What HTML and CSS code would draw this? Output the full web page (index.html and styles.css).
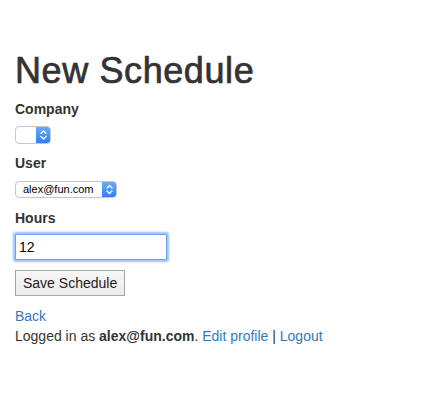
FILE: index.html
```html
<!DOCTYPE html>
<html>
<head>
<meta charset="utf-8">
<link rel="stylesheet" href="styles.css">
</head>
<body>
<div class="container">
  <h1 class="title">New Schedule</h1>
  <form class="form">
    <div class="field">
      <label class="label">Company</label>
      <span class="select select-company">
        <select class="select-native"><option></option></select>
        <span class="select-arrow">
          <svg width="15" height="18" viewBox="0 0 15 18"><path d="M5 7.5 L7.5 5 L10 7.5 M5 10.5 L7.5 13 L10 10.5" fill="none" stroke="#fff" stroke-width="1.3" stroke-linecap="round" stroke-linejoin="round"/></svg>
        </span>
      </span>
    </div>
    <div class="field field-user">
      <label class="label">User</label>
      <span class="select select-user">
        <select class="select-native"><option>alex@fun.com</option></select>
        <span class="select-arrow">
          <svg width="15" height="17" viewBox="0 0 15 17"><path d="M5 7 L7.5 4.5 L10 7 M5 10 L7.5 12.5 L10 10" fill="none" stroke="#fff" stroke-width="1.3" stroke-linecap="round" stroke-linejoin="round"/></svg>
        </span>
      </span>
    </div>
    <div class="field field-hours">
      <label class="label">Hours</label>
      <input class="input" type="text" value="12">
    </div>
    <button class="button" type="button">Save Schedule</button>
  </form>
  <div class="footer">
    <a class="link" href="#">Back</a>
    <p class="status">Logged in as <strong>alex@fun.com</strong>. <a class="link" href="#">Edit profile</a> | <a class="link" href="#">Logout</a></p>
  </div>
</div>
</body>
</html>
```
FILE: styles.css
```css
html, body {
  margin: 0;
  padding: 0;
  background: #fff;
}
body {
  font-family: "Liberation Sans", Arial, sans-serif;
  font-size: 14px;
  line-height: 20px;
  color: #333;
}
.container {
  padding: 31px 15px 0 15px;
}
.title {
  font-size: 36px;
  font-weight: 500;
  line-height: 39.6px;
  margin: 20px 0 8px 0;
  letter-spacing: 0.6px;
  -webkit-text-stroke: 0.7px #333;
}
.form {
  display: flex;
  flex-direction: column;
  align-items: flex-start;
}
.field {
  display: flex;
  flex-direction: column;
  align-items: flex-start;
}
.label {
  font-weight: bold;
  line-height: 20px;
  display: block;
}
.field-hours .label {
  margin-top: 1px;
}
.select {
  position: relative;
  display: block;
  box-sizing: border-box;
  border: 1px solid #c6c6c6;
  border-radius: 4px;
  background: #fff;
  overflow: hidden;
}
.select-company {
  width: 36px;
  height: 18px;
  margin-top: 7px;
  margin-bottom: 9px;
}
.select-user {
  width: 102px;
  height: 17px;
  margin-top: 8px;
  margin-bottom: 9px;
}
.select-native {
  appearance: none;
  -webkit-appearance: none;
  border: 0;
  background: transparent;
  margin: 0;
  padding: 0 0 0 7px;
  font-family: "Liberation Sans", Arial, sans-serif;
  font-size: 11px;
  line-height: 15px;
  height: 15px;
  width: 100%;
  color: #000;
  display: block;
}
.select-arrow {
  position: absolute;
  top: -1px;
  right: -1px;
  bottom: -1px;
  width: 15px;
  background: linear-gradient(#6aaefc, #2a7ef6);
  border-radius: 0 4px 4px 0;
  display: flex;
  align-items: center;
  justify-content: center;
}
.select-arrow svg {
  display: block;
}
.input {
  box-sizing: border-box;
  width: 152px;
  height: 26px;
  margin: 6px 0 10px 0;
  padding: 0 3px;
  border: 1px solid #6aa3e8;
  border-radius: 1px;
  box-shadow: 0 0 2px 2px rgba(120, 175, 245, 0.75);
  font-family: "Liberation Sans", Arial, sans-serif;
  font-size: 14px;
  color: #000;
  outline: none;
}
.button {
  box-sizing: border-box;
  height: 26px;
  padding: 0 7px;
  border: 1px solid #a6a6a6;
  border-radius: 0;
  background: linear-gradient(#f7f7f7, #ececec);
  font-family: "Liberation Sans", Arial, sans-serif;
  font-size: 14px;
  color: #222;
  margin: 0;
}
.footer {
  margin-top: 10px;
}
.link {
  color: #337ab7;
  text-decoration: none;
}
.footer > .link {
  display: block;
}
.status {
  margin: 0;
}
.status strong {
  font-weight: bold;
}
```
